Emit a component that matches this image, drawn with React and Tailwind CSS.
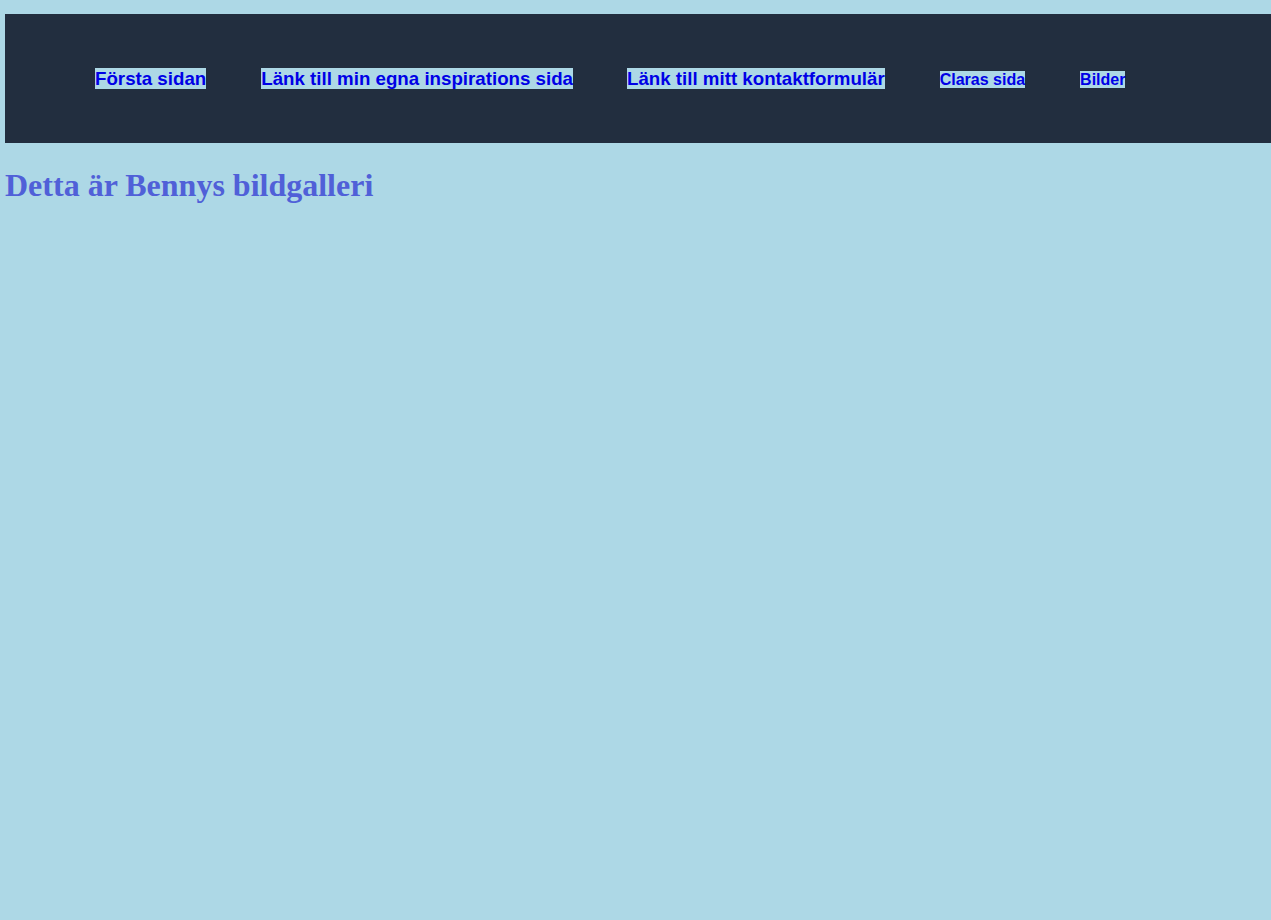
export default function App() {
  const link = "bg-[#add8e6] text-[#0000e6] font-bold no-underline";
  return (
    <div className="min-h-[920px] bg-[#add8e6] pl-[5px] pt-[14px] overflow-hidden" style={{ fontFamily: '"Liberation Sans", Arial, sans-serif' }}>
      <nav className="w-[1300px] h-[129px] bg-[#222e3f] flex items-center pl-[90px]">
        <a href="#" className={`${link} text-[18.72px] leading-[21px]`}>Första sidan</a>
        <a href="#" className={`${link} text-[18.72px] leading-[21px] ml-[55px]`}>Länk till min egna inspirations sida</a>
        <a href="#" className={`${link} text-[18.72px] leading-[21px] ml-[54px]`}>Länk till mitt kontaktformulär</a>
        <a href="#" className={`${link} text-[16px] leading-[17px] ml-[55px] mt-[2px]`}>Claras sida</a>
        <a href="#" className={`${link} text-[16px] leading-[17px] ml-[55px] mt-[2px]`}>Bilder</a>
      </nav>
      <h1 className="mt-[24px] text-[32px] leading-[37px] font-bold text-[#5060d8]" style={{ fontFamily: '"Liberation Serif", "Times New Roman", serif' }}>
        Detta är Bennys bildgalleri
      </h1>
    </div>
  );
}
